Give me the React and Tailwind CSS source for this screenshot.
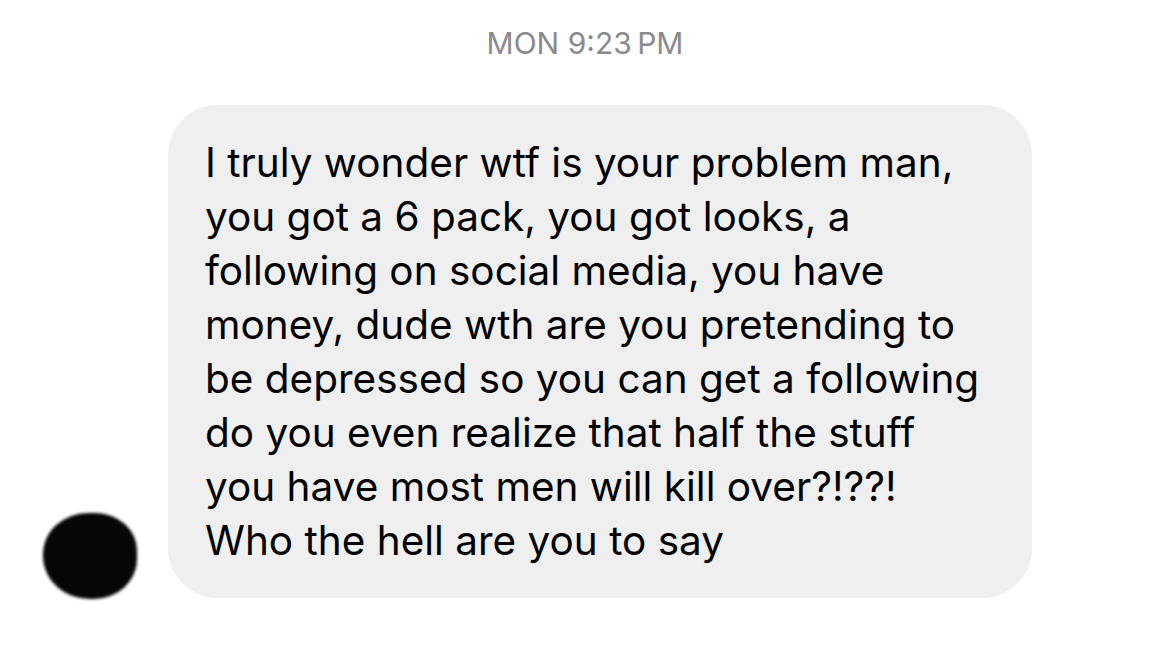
export default function App() {
  const lines = [
    'I truly wonder wtf is your problem man,',
    'you got a 6 pack, you got looks, a',
    'following on social media, you have',
    'money, dude wth are you pretending to',
    'be depressed so you can get a following',
    'do you even realize that half the stuff',
    'you have most men will kill over?!??!',
    'Who the hell are you to say',
  ];

  return (
    <div className="min-h-screen w-[1170px] bg-white font-['Inter',sans-serif]">
      {/* Timestamp */}
      <div className="pt-[25px] text-center text-[30px] leading-[36px] text-[#8a8a8e]">
        MON 9:23&thinsp;PM
      </div>

      {/* Message row */}
      <div className="mt-[44px] flex items-end pl-[43px]">
        <div className="mb-[-1px] h-[86px] w-[94px] rounded-[48%_44%_46%_50%] bg-[#050608] blur-[1.5px]" />
        <div className="ml-[31px] w-[864px] rounded-[50px] bg-[#efefef] pl-[37px] pr-[30px] pt-[31px] pb-[30px] text-[40.5px] leading-[54px] text-black">
          {lines.map((l, i) => (
            <div key={i} className="whitespace-nowrap">{l}</div>
          ))}
        </div>
      </div>
    </div>
  );
}
